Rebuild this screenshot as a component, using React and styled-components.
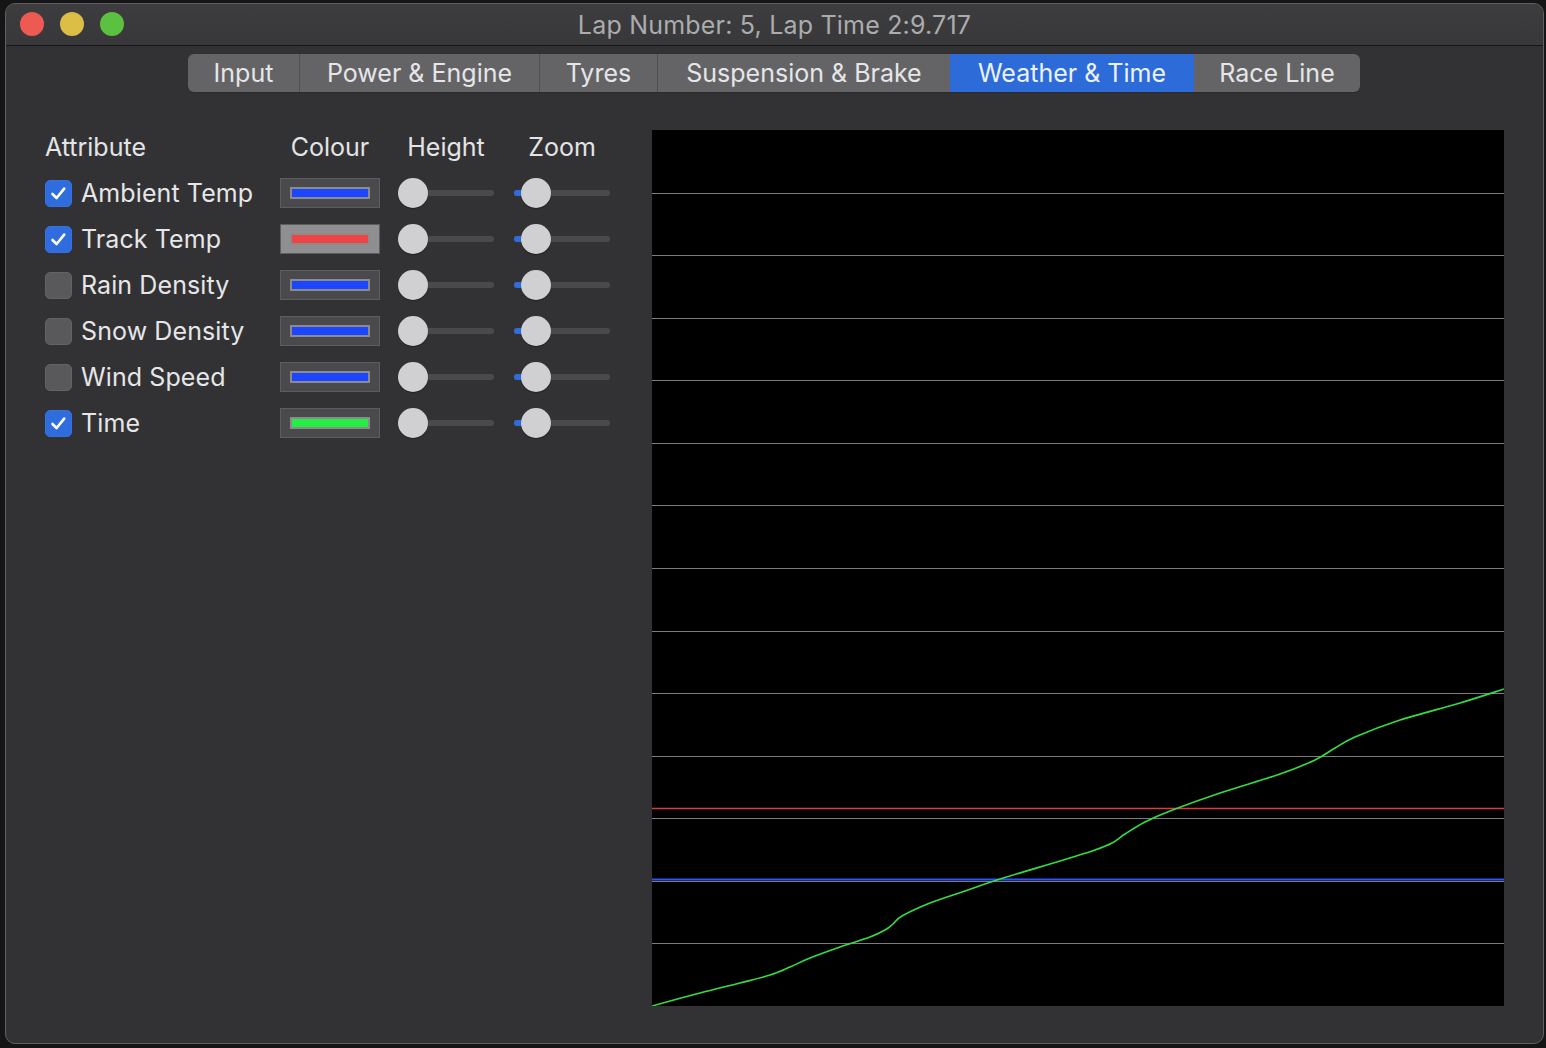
import React from 'react';
import styled, { createGlobalStyle } from 'styled-components';

const GlobalStyle = createGlobalStyle`
  html, body {
    margin: 0;
    padding: 0;
    background: #151515;
  }
  body {
    font-family: Inter, "Noto Sans", "Liberation Sans", sans-serif;
  }
`;

const Page = styled.div`
  width: 1546px;
  height: 1048px;
  padding: 3px 0 0 5px;
  box-sizing: border-box;
`;

const Window = styled.div`
  width: 1539px;
  height: 1041px;
  box-sizing: border-box;
  border: 1px solid #5f5f61;
  border-radius: 10px;
  background: #323234;
  overflow: hidden;
  display: flex;
  flex-direction: column;
`;

const TitleBar = styled.div`
  position: relative;
  height: 41px;
  flex-shrink: 0;
  display: flex;
  align-items: center;
  justify-content: center;
  background: linear-gradient(#3d3d3f, #38383a);
  border-bottom: 1px solid #151515;
`;

const Lights = styled.div`
  position: absolute;
  left: 14px;
  top: 8px;
  display: flex;
  gap: 16px;
`;

const Light = styled.span`
  width: 24px;
  height: 24px;
  border-radius: 50%;
  background: ${p => p.color};
`;

const Title = styled.div`
  color: #acacae;
  font-size: 25px;
  letter-spacing: 0.2px;
`;

const TabBar = styled.div`
  align-self: center;
  margin: 8px 1px 0 0;
  display: flex;
  height: 38px;
  border-radius: 6px;
  overflow: hidden;
  background: #646466;
  box-shadow: 0 1px 0 #2a2a2c;
`;

const Tab = styled.div`
  width: ${p => p.w}px;
  box-sizing: border-box;
  display: flex;
  align-items: center;
  justify-content: center;
  font-size: 25px;
  color: ${p => (p.active ? '#ecf2ff' : '#e6e6e8')};
  background: ${p => (p.active ? '#2d6bd9' : 'transparent')};
  border-left: ${p => (p.first || p.active || p.afterActive ? 'none' : '1px solid #4e4e50')};
`;

const Content = styled.div`
  display: flex;
  padding-left: 39px;
`;

const Panel = styled.div`
  width: 607px;
  margin-top: 32px;
  display: grid;
  grid-template-columns: 235px 100px 114px 116px;
  grid-auto-rows: 46px;
  align-content: start;
  align-items: center;
`;

const Head = styled.div`
  font-size: 25px;
  color: #e4e4e6;
  text-align: ${p => (p.left ? 'left' : 'center')};
  padding-left: ${p => p.pad || 0}px;
`;

const AttrCell = styled.label`
  display: flex;
  align-items: center;
  gap: 9px;
  font-size: 25px;
  letter-spacing: 0.1px;
  color: #e6e6e8;
`;

const Check = styled.span`
  width: 27px;
  height: 27px;
  box-sizing: border-box;
  border-radius: 5px;
  display: flex;
  align-items: center;
  justify-content: center;
  background: ${p => (p.on ? '#2f6ddf' : '#59595b')};
  border: 1px solid ${p => (p.on ? '#3572e0' : '#636365')};
`;

const Well = styled.div`
  width: 100px;
  height: 30px;
  box-sizing: border-box;
  border: 1px solid #5d5d5f;
  background: ${p => (p.selected ? '#8f8f91' : '#4a4a4c')};
  display: flex;
  align-items: center;
  justify-content: center;
`;

const Swatch = styled.div`
  width: 80px;
  height: 12px;
  box-sizing: border-box;
  border: 2px solid #8b8b8d;
  background: ${p => p.color};
`;

const SliderCell = styled.div`
  padding-left: ${p => p.pad}px;
`;

const Slider = styled.div`
  position: relative;
  width: 96px;
  height: 30px;
  display: flex;
  align-items: center;
`;

const Track = styled.div`
  width: 100%;
  height: 6px;
  border-radius: 3px;
  background: #4a4a4c;
`;

const Fill = styled.div`
  position: absolute;
  left: 0;
  top: 12px;
  height: 6px;
  width: ${p => p.w}px;
  border-radius: 3px;
  background: #2f6ddf;
`;

const Knob = styled.div`
  position: absolute;
  top: 0;
  left: ${p => p.at}px;
  width: 30px;
  height: 30px;
  border-radius: 50%;
  background: #d0d0d2;
  box-shadow: 0 1px 1px rgba(0, 0, 0, 0.35);
`;

const ChartBox = styled.div`
  margin-top: 38px;
  width: 852px;
  height: 876px;
  background: #000;
`;

const tabs = [
  { label: 'Input', w: 111 },
  { label: 'Power & Engine', w: 240 },
  { label: 'Tyres', w: 118 },
  { label: 'Suspension & Brake', w: 293 },
  { label: 'Weather & Time', w: 244, active: true },
  { label: 'Race Line', w: 166 },
];

const rows = [
  { name: 'Ambient Temp', on: true, color: '#1b45ff' },
  { name: 'Track Temp', on: true, color: '#f04444', selected: true },
  { name: 'Rain Density', on: false, color: '#1b45ff' },
  { name: 'Snow Density', on: false, color: '#1b45ff' },
  { name: 'Wind Speed', on: false, color: '#1b45ff' },
  { name: 'Time', on: true, color: '#22ee44' },
];

const greenPts = [
  [652, 1006], [700, 993], [740, 983], [770, 975], [790, 967], [810, 958],
  [840, 947], [870, 937], [885, 930], [893, 924], [902, 916], [930, 903],
  [965, 891], [1000, 879], [1060, 861], [1095, 850], [1112, 843], [1125, 834],
  [1145, 822], [1170, 811], [1220, 793], [1280, 774], [1315, 760], [1335, 748],
  [1355, 737], [1400, 720], [1460, 703], [1504, 689],
];

// catmull-rom to bezier so the trace looks smooth like the original
const smoothPath = pts => {
  const p = pts.map(([x, y]) => [x - 652, y - 130]);
  let d = `M${p[0][0]},${p[0][1]}`;
  for (let i = 0; i < p.length - 1; i++) {
    const p0 = p[i - 1] || p[i];
    const p1 = p[i];
    const p2 = p[i + 1];
    const p3 = p[i + 2] || p2;
    const c1x = p1[0] + (p2[0] - p0[0]) / 6;
    const c1y = p1[1] + (p2[1] - p0[1]) / 6;
    const c2x = p2[0] - (p3[0] - p1[0]) / 6;
    const c2y = p2[1] - (p3[1] - p1[1]) / 6;
    d += ` C${c1x},${c1y} ${c2x},${c2y} ${p2[0]},${p2[1]}`;
  }
  return d;
};

const CheckMark = () => (
  <svg width="19" height="19" viewBox="0 0 19 19">
    <path d="M3.5 10 L7.6 14 L15.2 4.6" fill="none" stroke="#fff" strokeWidth="2.6" strokeLinecap="round" strokeLinejoin="round" />
  </svg>
);

const Chart = () => {
  const step = 876 / 14;
  const lines = [];
  for (let i = 1; i < 14; i++) lines.push(Math.round(i * step) + 0.5);
  return (
    <svg width="852" height="876" viewBox="0 0 852 876">
      {lines.map(y => (
        <line key={y} x1="0" x2="852" y1={y} y2={y} stroke="#7c7c7c" strokeWidth="1" />
      ))}
      <line x1="0" x2="852" y1="678.5" y2="678.5" stroke="#e03a3a" strokeWidth="1.5" />
      <line x1="0" x2="852" y1="749.5" y2="749.5" stroke="#2a52ff" strokeWidth="2" />
      <path d={smoothPath(greenPts)} fill="none" stroke="#33dd44" strokeWidth="1.6" />
    </svg>
  );
};

export default function App() {
  return (
    <Page>
      <GlobalStyle />
      <Window>
        <TitleBar>
          <Lights>
            <Light color="#ee5a52" />
            <Light color="#dcbd45" />
            <Light color="#5cc040" />
          </Lights>
          <Title>Lap Number: 5, Lap Time 2:9.717</Title>
        </TitleBar>
        <TabBar>
          {tabs.map((t, i) => (
            <Tab
              key={t.label}
              w={t.w}
              active={t.active}
              first={i === 0}
              afterActive={i > 0 && tabs[i - 1].active}
            >
              {t.label}
            </Tab>
          ))}
        </TabBar>
        <Content>
          <Panel>
            <Head left>Attribute</Head>
            <Head>Colour</Head>
            <Head pad={18}>Height</Head>
            <Head pad={20}>Zoom</Head>
            {rows.map(r => (
              <React.Fragment key={r.name}>
                <AttrCell>
                  <Check on={r.on}>{r.on && <CheckMark />}</Check>
                  {r.name}
                </AttrCell>
                <Well selected={r.selected}>
                  <Swatch color={r.color} />
                </Well>
                <SliderCell pad={18}>
                  <Slider>
                    <Track />
                    <Knob at={0} />
                  </Slider>
                </SliderCell>
                <SliderCell pad={20}>
                  <Slider>
                    <Track />
                    <Fill w={14} />
                    <Knob at={7} />
                  </Slider>
                </SliderCell>
              </React.Fragment>
            ))}
          </Panel>
          <ChartBox>
            <Chart />
          </ChartBox>
        </Content>
      </Window>
    </Page>
  );
}
